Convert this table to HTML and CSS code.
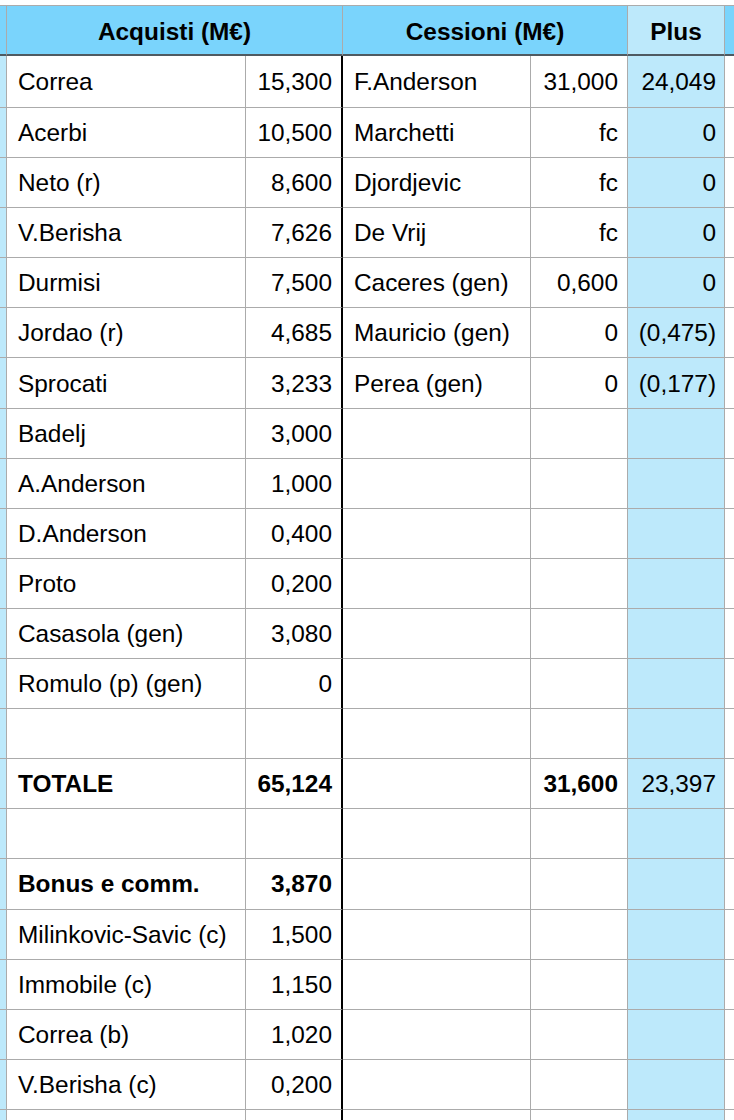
FILE: index.html
```html
<!DOCTYPE html>
<html lang="it">
<head>
<meta charset="utf-8">
<title>Acquisti e Cessioni</title>
<link rel="stylesheet" href="styles.css">
</head>
<body>
<div class="sheet">
  <div class="c strip hd"></div>
  <div class="c hd title span2">Acquisti (M€)</div>
  <div class="c hd title span2">Cessioni (M€)</div>
  <div class="c hd title plus">Plus</div>
  <div class="c hd end"></div>

  <div class="c strip"></div><div class="c name">Correa</div><div class="c num sep">15,300</div><div class="c name">F.Anderson</div><div class="c num">31,000</div><div class="c num plus">24,049</div><div class="c end"></div>
  <div class="c strip"></div><div class="c name">Acerbi</div><div class="c num sep">10,500</div><div class="c name">Marchetti</div><div class="c num">fc</div><div class="c num plus">0</div><div class="c end"></div>
  <div class="c strip"></div><div class="c name">Neto (r)</div><div class="c num sep">8,600</div><div class="c name">Djordjevic</div><div class="c num">fc</div><div class="c num plus">0</div><div class="c end"></div>
  <div class="c strip"></div><div class="c name">V.Berisha</div><div class="c num sep">7,626</div><div class="c name">De Vrij</div><div class="c num">fc</div><div class="c num plus">0</div><div class="c end"></div>
  <div class="c strip"></div><div class="c name">Durmisi</div><div class="c num sep">7,500</div><div class="c name">Caceres (gen)</div><div class="c num">0,600</div><div class="c num plus">0</div><div class="c end"></div>
  <div class="c strip"></div><div class="c name">Jordao (r)</div><div class="c num sep">4,685</div><div class="c name">Mauricio (gen)</div><div class="c num">0</div><div class="c num plus">(0,475)</div><div class="c end"></div>
  <div class="c strip"></div><div class="c name">Sprocati</div><div class="c num sep">3,233</div><div class="c name">Perea (gen)</div><div class="c num">0</div><div class="c num plus">(0,177)</div><div class="c end"></div>
  <div class="c strip"></div><div class="c name">Badelj</div><div class="c num sep">3,000</div><div class="c name"></div><div class="c num"></div><div class="c num plus"></div><div class="c end"></div>
  <div class="c strip"></div><div class="c name">A.Anderson</div><div class="c num sep">1,000</div><div class="c name"></div><div class="c num"></div><div class="c num plus"></div><div class="c end"></div>
  <div class="c strip"></div><div class="c name">D.Anderson</div><div class="c num sep">0,400</div><div class="c name"></div><div class="c num"></div><div class="c num plus"></div><div class="c end"></div>
  <div class="c strip"></div><div class="c name">Proto</div><div class="c num sep">0,200</div><div class="c name"></div><div class="c num"></div><div class="c num plus"></div><div class="c end"></div>
  <div class="c strip"></div><div class="c name">Casasola (gen)</div><div class="c num sep">3,080</div><div class="c name"></div><div class="c num"></div><div class="c num plus"></div><div class="c end"></div>
  <div class="c strip"></div><div class="c name">Romulo (p) (gen)</div><div class="c num sep">0</div><div class="c name"></div><div class="c num"></div><div class="c num plus"></div><div class="c end"></div>
  <div class="c strip"></div><div class="c name"></div><div class="c num sep"></div><div class="c name"></div><div class="c num"></div><div class="c num plus"></div><div class="c end"></div>
  <div class="c strip"></div><div class="c name b">TOTALE</div><div class="c num sep b">65,124</div><div class="c name"></div><div class="c num b">31,600</div><div class="c num plus">23,397</div><div class="c end"></div>
  <div class="c strip"></div><div class="c name"></div><div class="c num sep"></div><div class="c name"></div><div class="c num"></div><div class="c num plus"></div><div class="c end"></div>
  <div class="c strip"></div><div class="c name b">Bonus e comm.</div><div class="c num sep b">3,870</div><div class="c name"></div><div class="c num"></div><div class="c num plus"></div><div class="c end"></div>
  <div class="c strip"></div><div class="c name">Milinkovic-Savic (c)</div><div class="c num sep">1,500</div><div class="c name"></div><div class="c num"></div><div class="c num plus"></div><div class="c end"></div>
  <div class="c strip"></div><div class="c name">Immobile (c)</div><div class="c num sep">1,150</div><div class="c name"></div><div class="c num"></div><div class="c num plus"></div><div class="c end"></div>
  <div class="c strip"></div><div class="c name">Correa (b)</div><div class="c num sep">1,020</div><div class="c name"></div><div class="c num"></div><div class="c num plus"></div><div class="c end"></div>
  <div class="c strip"></div><div class="c name">V.Berisha (c)</div><div class="c num sep">0,200</div><div class="c name"></div><div class="c num"></div><div class="c num plus"></div><div class="c end"></div>
  <div class="c strip"></div><div class="c name"></div><div class="c num sep"></div><div class="c name"></div><div class="c num"></div><div class="c num plus"></div><div class="c end"></div>
</div>
</body>
</html>
```

FILE: styles.css
```css
html, body {
  margin: 0;
  padding: 0;
  background: #ffffff;
  overflow: hidden;
}

body {
  font-family: "Liberation Sans", Arial, Helvetica, sans-serif;
  font-size: 24.4px;
  color: #000000;
}

.sheet {
  margin-top: 5px;
  border-top: 1px solid #ababab;
  display: grid;
  grid-template-columns: 7px 239px 97px 188px 97px 97px 1fr;
  grid-template-rows: 50px 52px repeat(21, 50.1px);
  width: 734px;
}

.c {
  box-sizing: border-box;
  border-right: 1px solid #ababab;
  border-bottom: 1px solid #ababab;
  display: flex;
  align-items: center;
  white-space: nowrap;
  overflow: hidden;
  min-width: 0;
  padding-top: 1px;
}

.strip {
  background: #bde9fb;
}

.end {
  border-right: none;
}

.name {
  padding-left: 11px;
}

.num {
  justify-content: flex-end;
  padding-right: 9px;
}

.num.plus {
  padding-right: 8px;
}

.sep {
  border-right: 2px solid #000000;
}

.plus {
  background: #bde9fb;
}

.b {
  font-weight: 700;
}

.hd {
  background: #7ad4fc;
  border-bottom: 2px solid #4f5a61;
}

.hd.plus {
  background: #bde9fb;
}

.title {
  justify-content: center;
  font-weight: 700;
  padding-top: 4px;
}

.span2 {
  grid-column: span 2;
}
```
